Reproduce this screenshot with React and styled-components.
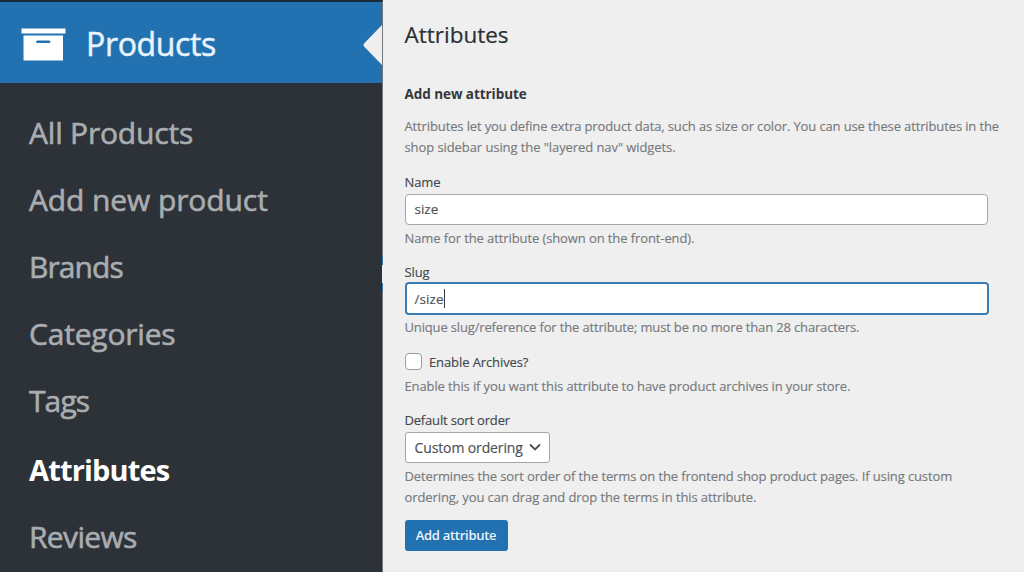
import styled, { createGlobalStyle } from "styled-components";

const GlobalStyle = createGlobalStyle`
  * {
    box-sizing: border-box;
  }

  body {
    margin: 0;
    overflow: hidden;
    background-color: #efefef;
    font-family: "Open Sans", "Noto Sans", sans-serif;
  }
`;

const Page = styled.div`
  display: flex;
  width: 1024px;
  height: 572px;
  overflow: hidden;
`;

const Sidebar = styled.aside`
  position: relative;
  width: 383px;
  flex-shrink: 0;
  border-top: 2px solid #1b2a38;
  border-right: 1px solid #73777a;
  background-color: #2d3238;
`;

const MenuTitle = styled.a`
  display: flex;
  align-items: center;
  justify-content: space-between;
  height: 81px;
  padding: 4px 0 0 21px;
  background-color: #2271b1;
`;

const TitleText = styled.span`
  flex: 1;
  margin-left: 20px;
  padding-bottom: 1px;
  font-size: 32px;
  line-height: 44px;
  letter-spacing: -0.35px;
  -webkit-text-stroke: 0.5px #e9f3fb;
  color: #e9f3fb;
`;

const SubMenu = styled.ul`
  margin: 0;
  padding: 16px 0 0 29px;
  list-style: none;
`;

const SubItem = styled.li`
  height: 67px;
  margin-top: ${({ $active }) => ($active ? 1.5 : 0)}px;
  font-size: ${({ $active }) => ($active ? 29 : 30)}px;
  line-height: 67px;
  font-weight: ${({ $active }) => ($active ? 700 : 400)};
  letter-spacing: ${({ $spacing }) => $spacing}px;
  -webkit-text-stroke: ${({ $active }) => ($active ? 0 : 0.6)}px #a9adb0;
  white-space: nowrap;
  color: ${({ $active }) => ($active ? "#fff" : "#a9adb0")};
`;

const EdgeMark = styled.span`
  position: absolute;
  top: 254px;
  right: -1px;
  width: 1px;
  height: 35px;
  border: solid #2b75ad;
  border-width: 9px 0 8px;
  background-color: #efefef;
`;

const Content = styled.main`
  flex: 1;
  padding: 19px 0 0 21.5px;
`;

const Heading = styled.h1`
  margin: 0;
  font-size: 22.5px;
  line-height: 32px;
  font-weight: 400;
  -webkit-text-stroke: 0.2px #2c3034;
  color: #2c3034;
`;

const SubHeading = styled.h2`
  margin: 33px 0 12px;
  font-size: 13.5px;
  line-height: 20px;
  font-weight: 700;
  letter-spacing: -0.06px;
  color: #33373b;
`;

const Line = styled.span`
  display: block;
  font-size: 13px;
  line-height: 20.5px;
  letter-spacing: ${({ $spacing }) => $spacing || -0.1}px;
  -webkit-text-stroke: 0.15px #777a7d;
  white-space: nowrap;
  color: #777a7d;
`;

const Field = styled.div`
  display: flex;
  flex-direction: column;
  align-items: flex-start;
  margin-top: ${({ $top }) => $top}px;
`;

const Label = styled.label`
  font-size: 13px;
  line-height: 20px;
  letter-spacing: ${({ $spacing }) => $spacing || -0.1}px;
  -webkit-text-stroke: 0.15px #44484c;
  color: #44484c;
`;

const TextBox = styled.div`
  display: flex;
  align-items: center;
  width: 583px;
  height: 31px;
  margin: 2px 0 3px;
  padding: 0 0 1px 9px;
  border: 1px solid #a3a5a8;
  border-radius: 4px;
  background-color: #fff;
  font-size: 13.5px;
  line-height: 20px;
  -webkit-text-stroke: 0.15px #4d5155;
  color: #4d5155;
`;

const FocusedBox = styled(TextBox)`
  width: 584px;
  height: 33px;
  margin: 0 0 2px;
  padding: 0 0 0 8px;
  border: 2px solid #3a7db5;
  letter-spacing: 0.1px;
`;

const Caret = styled.span`
  width: 1px;
  height: 19px;
  background-color: #33373b;
`;

const CheckRow = styled.div`
  display: flex;
  align-items: center;
  gap: 7.5px;
  height: 20px;
  margin-bottom: 4px;
`;

const CheckBox = styled.span`
  width: 17px;
  height: 17px;
  margin-bottom: 1px;
  border: 1px solid #9a9da0;
  border-radius: 4px;
  background-color: #fff;
`;

const Select = styled.div`
  display: flex;
  align-items: center;
  justify-content: space-between;
  width: 145px;
  height: 31px;
  margin: 2px 0 3px;
  padding: 0 8px 0 9px;
  border: 1px solid #a3a5a8;
  border-radius: 3px;
  background-color: #fff;
  font-size: 14px;
  letter-spacing: -0.12px;
  -webkit-text-stroke: 0.15px #4d5155;
  white-space: nowrap;
  color: #4d5155;
`;

const SubmitButton = styled.button`
  width: 103px;
  height: 31px;
  margin-top: 12.5px;
  padding: 0;
  border: none;
  border-radius: 3px;
  background-color: #2271b1;
  font-family: inherit;
  font-size: 13px;
  font-weight: 600;
  letter-spacing: -0.27px;
  color: #eaf3fa;
`;

const ArchiveIcon = () => (
  <svg width="45" height="34" viewBox="0 0 45 34" fill="#fff">
    <path d="M0.500 0.500h44v5H0.500z" />
    <path fillRule="evenodd" d="M2.500 7.500h39.500V32.500H2.500zM16 12.500q-2 1.300 0 2.600h12.500q2-1.300 0-2.600z" />
  </svg>
);

const MenuArrow = () => (
  <svg width="19" height="40" viewBox="0 0 19 40" fill="#efefef">
    <path d="M19 0v40L1.500 22q-2-2 0-4z" />
  </svg>
);

const ChevronIcon = () => (
  <svg width="12" height="9" viewBox="0 0 12 9" fill="none" stroke="#4d5155" strokeWidth="1.900">
    <path d="M1 1.500l5 5 5-5" />
  </svg>
);

const menuItems = [
  { title: "All Products", spacing: -0.2 },
  { title: "Add new product", spacing: -0.1 },
  { title: "Brands", spacing: -0.9 },
  { title: "Categories", spacing: -0.2 },
  { title: "Tags", spacing: -0.9 },
  { title: "Attributes", active: true, spacing: -0.85 },
  { title: "Reviews", spacing: -0.65 },
];

const App = () => {
  return (
    <>
      <GlobalStyle />
      <Page>
        <Sidebar>
          <MenuTitle>
            <ArchiveIcon />
            <TitleText>Products</TitleText>
            <MenuArrow />
          </MenuTitle>
          <SubMenu>
            {menuItems.map(({ title, active, spacing }) => (
              <SubItem key={title} $active={active} $spacing={spacing}>
                {title}
              </SubItem>
            ))}
          </SubMenu>
          <EdgeMark />
        </Sidebar>
        <Content>
          <Heading>Attributes</Heading>
          <SubHeading>Add new attribute</SubHeading>
          <Line $spacing={-0.125}>
            Attributes let you define extra product data, such as size or color. You can use these attributes in the
          </Line>
          <Line $spacing={-0.08}>shop sidebar using the "layered nav" widgets.</Line>
          <Field $top={14.5}>
            <Label>Name</Label>
            <TextBox>size</TextBox>
            <Line>Name for the attribute (shown on the front-end).</Line>
          </Field>
          <Field $top={14}>
            <Label>Slug</Label>
            <FocusedBox>
              /size
              <Caret />
            </FocusedBox>
            <Line $spacing={-0.155}>Unique slug/reference for the attribute; must be no more than 28 characters.</Line>
          </Field>
          <Field $top={14.5}>
            <CheckRow>
              <CheckBox />
              <Label>Enable Archives?</Label>
            </CheckRow>
            <Line $spacing={-0.115}>Enable this if you want this attribute to have product archives in your store.</Line>
          </Field>
          <Field $top={13.5}>
            <Label $spacing={-0.18}>Default sort order</Label>
            <Select>
              Custom ordering
              <ChevronIcon />
            </Select>
            <Line $spacing={-0.115}>Determines the sort order of the terms on the frontend shop product pages. If using custom</Line>
            <Line>ordering, you can drag and drop the terms in this attribute.</Line>
          </Field>
          <SubmitButton>Add attribute</SubmitButton>
        </Content>
      </Page>
    </>
  );
};

export default App;
